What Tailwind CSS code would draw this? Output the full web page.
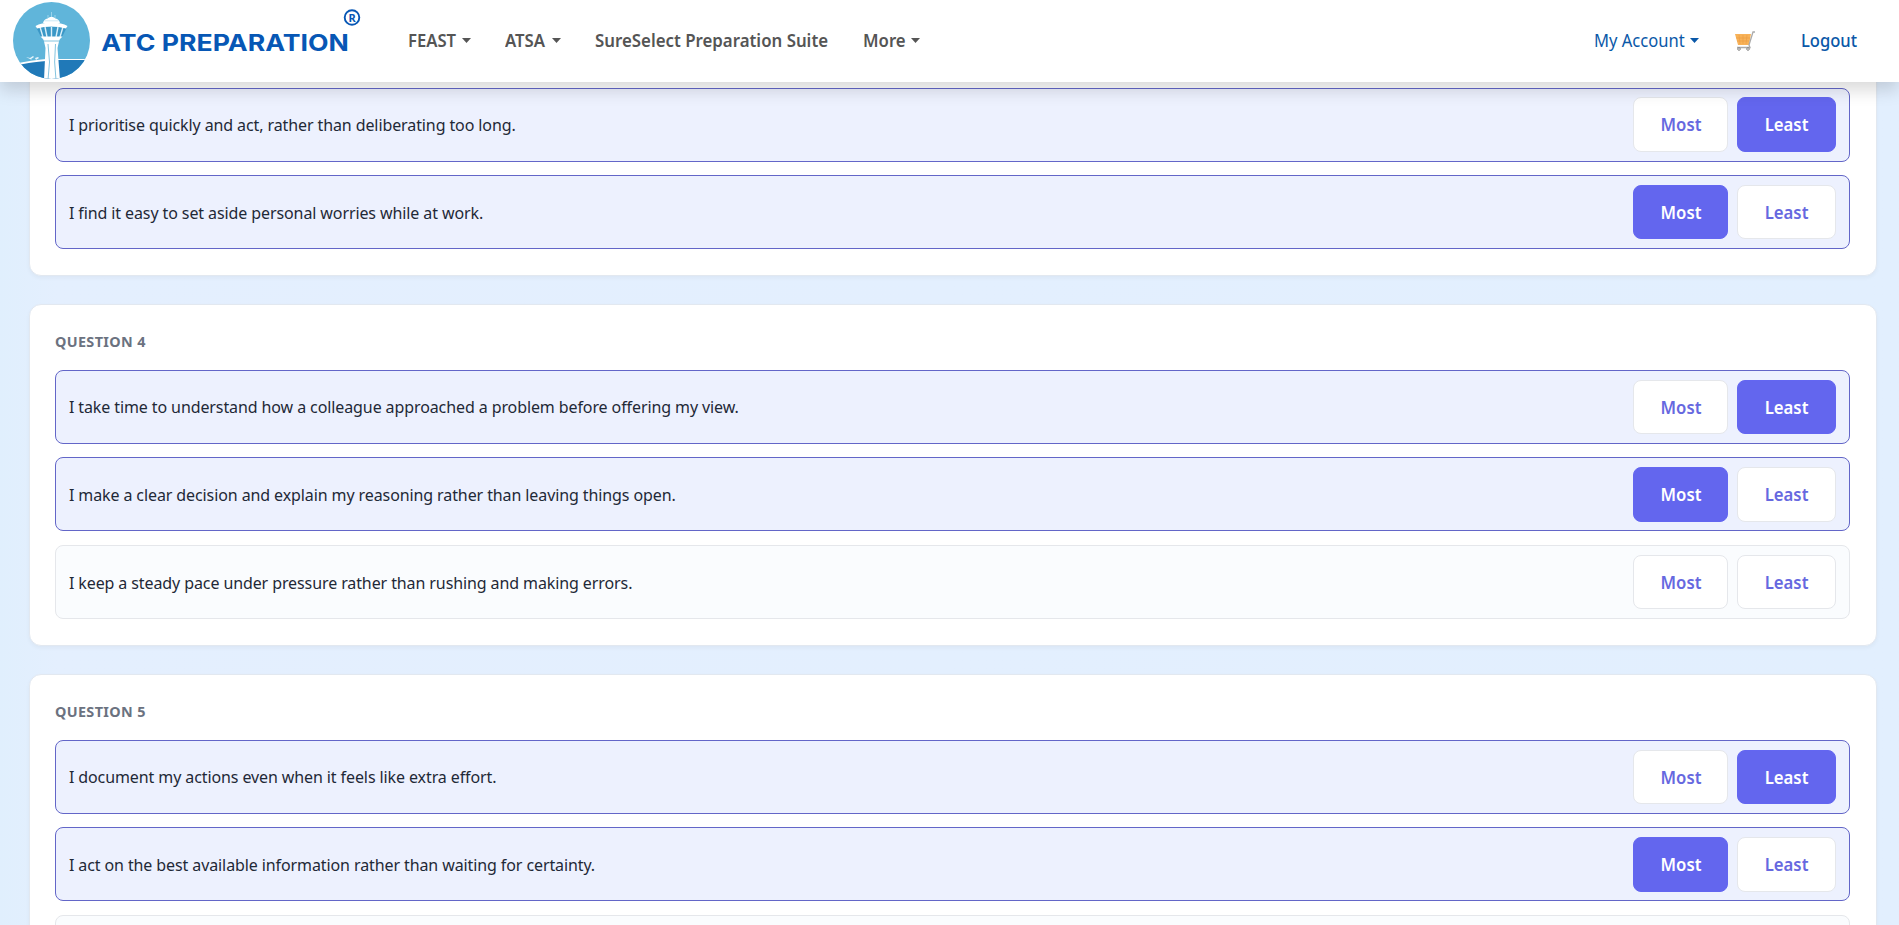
<!DOCTYPE html>
<html lang="en">
<head>
<meta charset="utf-8">
<title>ATC Preparation</title>
<script src="https://cdn.jsdelivr.net/npm/@tailwindcss/browser@4"></script>
</head>
<body class="h-screen overflow-hidden bg-linear-to-r from-[#e0effd] via-[#e4effe] via-3% to-[#e2effe] font-['Noto_Sans',sans-serif] text-[#1f2937]">
<nav class="relative z-10 flex h-[82px] items-center bg-white pl-[13px] text-[18px] leading-6 font-semibold text-[#555] shadow-[0_8px_16px_rgba(0,0,0,0.15)]">
  <svg class="h-[78px] w-[78px] shrink-0" viewBox="0 0 78 78">
    <defs><clipPath id="disc"><circle cx="38.5" cy="38.500" r="38.5"/></clipPath></defs>
    <g clip-path="url(#disc)">
      <rect width="78" height="78" fill="#60b5da"/>
      <path d="M0 63Q24 59 38 58H78V78H0Z" fill="#2079b8"/>
      <path d="M0 62Q20 58 33 57V59Q18 60 0 64ZM45 57H78V58H45Z" fill="#fff"/>
      <path d="M13 55l4 1 3-2 1 1-3 2 1 1zM22 56l3-1 1 1-3 2z" fill="#e8f5fb"/>
      <path d="M30 35H47L44.500 46 47 78H31L32.500 46Z" fill="#fff"/>
      <path d="M35 42Q38 60 35 78M42.500 42Q40.500 60 43 78M31 39H46" fill="none" stroke="#76bddb" stroke-width=".9"/>
      <path d="M23 25H54L49 35H28Z" fill="#3a97c6"/>
      <path d="M27 25l3 10M32 25l2 10M38.500 25v10M45 25l-2 10M50 25l-3 10" stroke="#d9eff9" stroke-width="1.400"/>
      <path d="M22.500 24Q28 20.500 38.500 20.500T54.500 24L53 26.500Q38 22.500 24 26.500ZM27.500 34.500H49.500L46 38H31Z" fill="#fff"/>
      <path d="M30 21Q31 17 34.500 16.500Q38.500 13 42.500 16.500Q46 17 47 21Z" fill="#fff"/>
      <path d="M31.500 18.800H45.500M38.500 10V15M35 13v3M42 13v3" stroke="#b5dff0" stroke-width=".7"/>
    </g>
  </svg>
  <svg class="ml-[10px] h-[82px] w-[262px] shrink-0" viewBox="0 0 262 82">
    <text x="0.300" y="51" textLength="247.500" lengthAdjust="spacingAndGlyphs" class="fill-[#0757b5] font-['Inter'] text-[23px] font-bold">ATC PREPARATION</text>
    <circle cx="251" cy="17.500" r="7.300" fill="none" stroke="#0757b5" stroke-width="1.900"/>
    <text x="247.500" y="21.500" class="fill-[#0757b5] font-['Noto_Sans'] text-[11px] font-bold">R</text>
  </svg>
  <div class="ml-[45px] flex items-center gap-[34px] pb-[2px] whitespace-nowrap">
    <div class="flex w-[63px] items-center justify-between"><span class="w-0"><span class="inline-block origin-left scale-x-[.925]">FEAST</span></span><svg class="h-[5px] w-[9px]" viewBox="0 0 9 5"><path d="M0 0H9L4.500 5Z" fill="currentColor"/></svg></div>
    <div class="flex w-[56px] items-center justify-between"><span class="w-0"><span class="inline-block origin-left scale-x-[.93]">ATSA</span></span><svg class="h-[5px] w-[9px]" viewBox="0 0 9 5"><path d="M0 0H9L4.500 5Z" fill="currentColor"/></svg></div>
    <div class="w-[234px]"><span class="inline-block origin-left scale-x-[.935]">SureSelect Preparation Suite</span></div>
    <div class="flex w-[57px] items-center justify-between"><span class="w-0"><span class="inline-block origin-left scale-x-[.93]">More</span></span><svg class="h-[5px] w-[9px]" viewBox="0 0 9 5"><path d="M0 0H9L4.500 5Z" fill="currentColor"/></svg></div>
  </div>
  <div class="mr-[42px] ml-auto flex items-center pb-[2px] whitespace-nowrap text-[#0a58a8]">
    <div class="flex w-[105px] items-center justify-between font-normal"><span class="w-0"><span class="inline-block origin-left scale-x-[.92]">My Account</span></span><svg class="h-[5px] w-[9px]" viewBox="0 0 9 5"><path d="M0 0H9L4.500 5Z" fill="currentColor"/></svg></div>
    <svg class="mt-[2px] ml-[36px] h-[20px] w-[20px]" viewBox="0 0 20 20"><path d="M0 3H16L14 14H3Z" fill="#f8b258"/><path d="M4 4l1 9M8 4v9M12 4l-1 9M1 7H15M2 10H14" stroke="#e99b45" stroke-width=".6"/><path d="M20 1H18L14 14 15 16.500H2" fill="none" stroke="#aaa" stroke-width="1.300"/><circle cx="4" cy="18" r="1.300" fill="none" stroke="#888"/><circle cx="13" cy="18" r="1.300" fill="none" stroke="#888"/></svg>
    <div class="ml-[46px] w-[56px] font-medium"><span class="inline-block origin-left scale-x-[.92]">Logout</span></div>
  </div>
</nav>
<main class="-mt-5 flex flex-col gap-[27.600px] pr-[22.500px] pl-[28.500px]" id="questions"></main>
<script>
const questions = [
  [null, [["I prioritise quickly and act, rather than deliberating too long.", "Least"], ["I find it easy to set aside personal worries while at work.", "Most"]]],
  ["QUESTION 4", [["I take time to understand how a colleague approached a problem before offering my view.", "Least"], ["I make a clear decision and explain my reasoning rather than leaving things open.", "Most"], ["I keep a steady pace under pressure rather than rushing and making errors.", ""]]],
  ["QUESTION 5", [["I document my actions even when it feels like extra effort.", "Least"], ["I act on the best available information rather than waiting for certainty.", "Most"], ["", ""]]]
];
const button = (label, selected) => `<button class="h-[54.4px] rounded-lg border text-[18px] leading-6 font-semibold ${label === "Most" ? "w-[95px]" : "w-[99px]"} ${selected ? "border-[#6366f1] bg-[#6366ee] text-white" : "border-[#e5e7eb] bg-white text-[#6668e0]"}"><span class="inline-block scale-x-[.93]">${label}</span></button>`;
document.getElementById("questions").innerHTML = questions.map(([title, rows]) => `
  <section class="rounded-xl border border-[#e2e8f0] bg-white px-[25.4px] pb-[26px] shadow-[0_2px_4px_rgba(0,0,0,0.04)] ${title ? "pt-[25.2px]" : "pt-[24.5px]"}">
    ${title ? `<h2 class="mb-[16px] h-6 text-[14.4px] leading-6 font-bold tracking-[0.38px] text-[#6b7280]">${title}</h2>` : ""}
    <div class="flex flex-col gap-[13.6px]">${rows.map(([text, pick]) => `
      <div class="flex h-[74px] items-center justify-between rounded-lg border pr-[13px] pl-[13px] ${pick ? "border-[#6366c8] bg-[#edf1fe]" : "border-[#e5e7eb] bg-[#fafcfe]"}">
        <p class="pt-px text-base tracking-[-0.1px]">${text}</p>
        <div class="flex gap-[9px]">${button("Most", pick === "Most")}${button("Least", pick === "Least")}</div>
      </div>`).join("")}
    </div>
  </section>`).join("");
</script>
</body>
</html>
